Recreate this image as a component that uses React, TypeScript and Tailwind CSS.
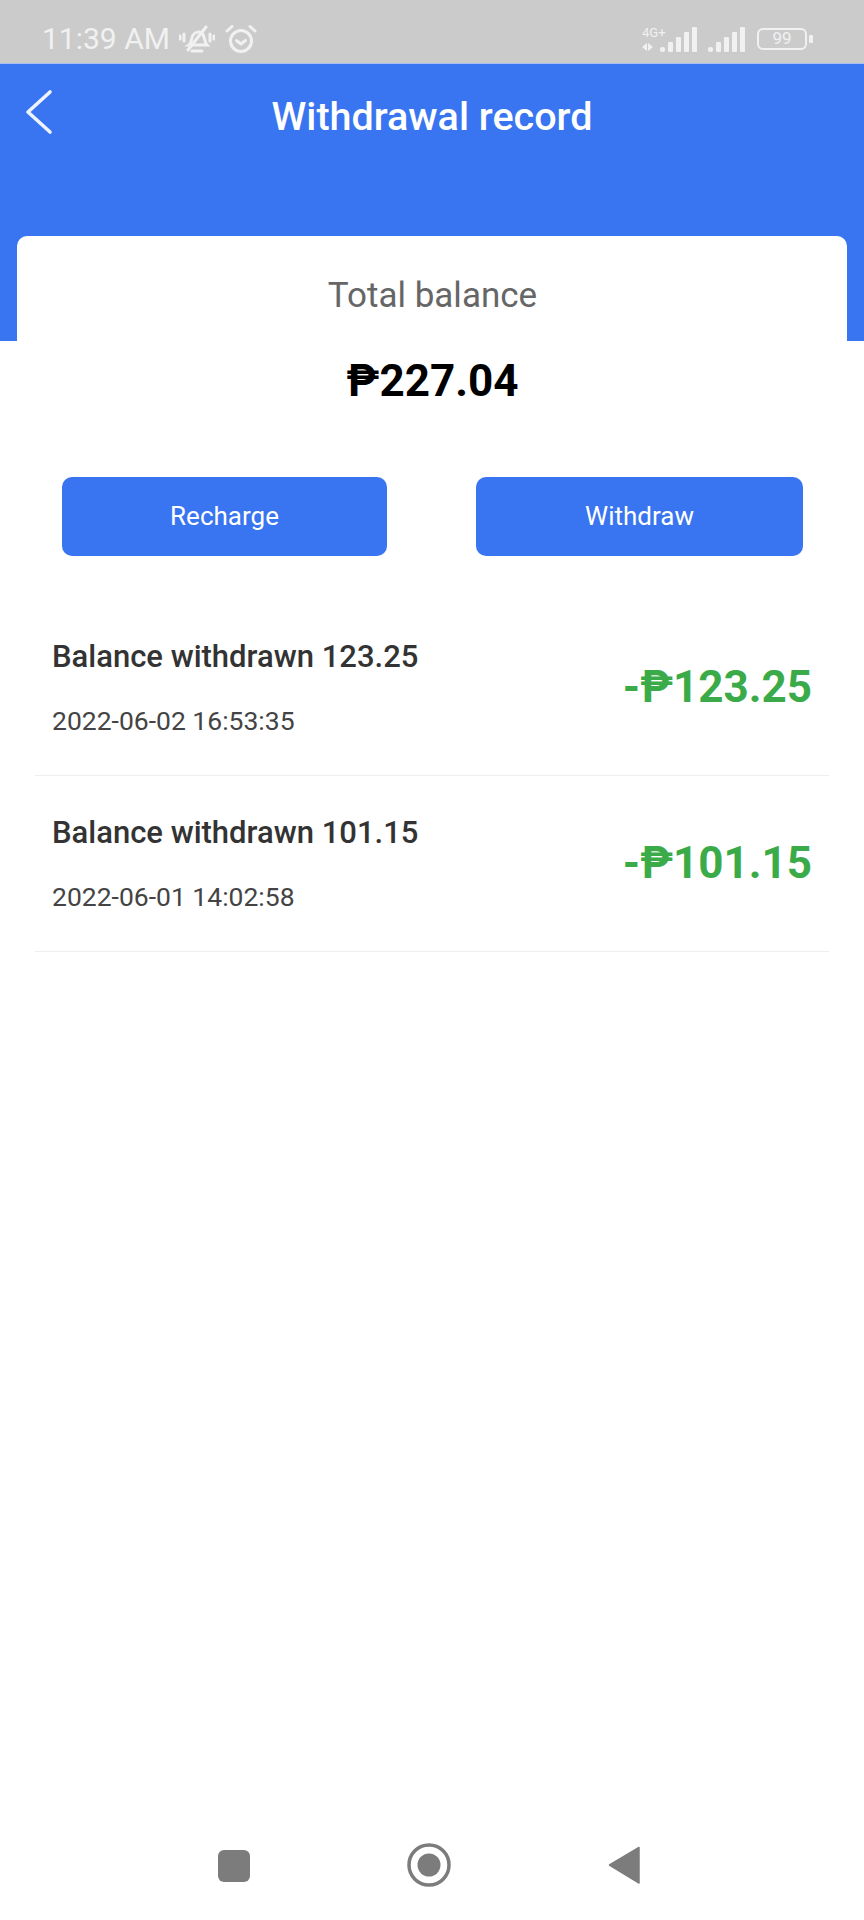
const records = [
  { id: 1, title: 'Balance withdrawn 123.25', date: '2022-06-02 16:53:35', amount: '-₱123.25' },
  { id: 2, title: 'Balance withdrawn 101.15', date: '2022-06-01 14:02:58', amount: '-₱101.15' },
];

function SignalBars() {
  return (
    <>
      <rect x="0" y="21" width="5" height="5" rx="2" />
      <rect x="8" y="16" width="5" height="10" rx="1" />
      <rect x="16" y="11" width="5" height="15" rx="1" />
      <rect x="24" y="6" width="5" height="20" rx="1" />
      <rect x="32" y="1" width="5" height="25" rx="1" />
    </>
  );
}

function StatusBar() {
  return (
    <div className="h-[64px] bg-[#cbcbcb] border-b border-[#a5bff5] flex items-center justify-between pl-[42px] pr-[51px] pt-[14px] text-[#f1f1f1]">
      <div className="flex items-center">
        <span className="text-[30px] leading-none">11:39 AM</span>
        <svg width="36" height="28" viewBox="0 0 36 28" fill="none" stroke="currentColor" strokeWidth="3" strokeLinecap="round" className="ml-[9px]">
          <path d="M10 20c3-2 2-7 4-10s7-4 9-2c3 3 2 9 5 12z" />
          <path d="M13 26h10" />
          <path d="M27 2L9 25" />
          <path d="M5 9v7M1 11v3M31 9v7M35 11v3" />
        </svg>
        <svg width="32" height="28" viewBox="0 0 32 28" fill="none" stroke="currentColor" strokeWidth="3" strokeLinecap="round" strokeLinejoin="round" className="ml-[10px]">
          <circle cx="16" cy="16" r="10.5" />
          <path d="M11.5 15.5l4.5 3.5 4.5-3.5" />
          <path d="M2 6l5-4.5M30 6l-5-4.5" />
        </svg>
      </div>
      <div className="flex items-center">
        <svg width="56" height="26" viewBox="0 0 56 26" fill="currentColor">
          <text x="0" y="11" fontSize="13" fontFamily="Roboto, sans-serif">4G+</text>
          <path d="M0 21l5-4v8zM11 21l-5 4v-8z" />
          <g transform="translate(18 0)">
            <SignalBars />
          </g>
        </svg>
        <svg width="37" height="26" viewBox="0 0 37 26" fill="currentColor" className="ml-[10px]">
          <SignalBars />
        </svg>
        <div className="ml-[12px] w-[50px] h-[22px] border-[2.5px] border-[#f1f1f1] rounded-[6px] flex items-center justify-center text-[17px] leading-none">
          99
        </div>
        <div className="ml-[2px] w-[4px] h-[8px] bg-[#f1f1f1] rounded-[1px]" />
      </div>
    </div>
  );
}

export default function App() {
  return (
    <div className="w-[864px] h-[1920px] bg-white flex flex-col font-['Roboto',sans-serif]">
      <StatusBar />

      <div className="h-[277px] bg-[#3974f1] relative flex justify-center pt-[30px]">
        <svg className="absolute left-[24px] top-[25px]" width="30" height="46" viewBox="0 0 30 46" fill="none" stroke="#eef4ff" strokeWidth="3.6" strokeLinecap="round" strokeLinejoin="round">
          <path d="M26 3L4 23l22 20" />
        </svg>
        <h1 className="text-[39.5px] leading-[46px] font-medium text-white">Withdrawal record</h1>
      </div>

      <div className="-mt-[105px] ml-[17px] mr-[17px] bg-white rounded-t-[10px] relative pl-[45px] pr-[44px]">
        <div className="pt-[36px] text-center text-[35px] leading-[48px] text-[#666666]">Total balance</div>
        <div className="mt-[33px] text-center text-[44px] leading-[56px] font-bold text-black">₱227.04</div>
        <div className="mt-[68px] flex justify-between">
          <button className="w-[325px] h-[79px] bg-[#3974f1] rounded-[10px] text-white text-[26px]">Recharge</button>
          <button className="w-[327px] h-[79px] bg-[#3974f1] rounded-[10px] text-white text-[26px]">Withdraw</button>
        </div>
      </div>

      <div className="mx-[35px] mt-[44px]">
        {records.map((r) => (
          <div key={r.id} className="h-[176px] border-b-[1.5px] border-[#eeeeee] flex items-center justify-between pl-[17px] pr-[17px]">
            <div className="mt-[2px]">
              <div className="text-[31px] leading-[36px] font-medium text-[#333333]">{r.title}</div>
              <div className="mt-[28px] text-[26.5px] leading-[36px] text-[#444444]">{r.date}</div>
            </div>
            <div className="-mt-[2px] text-[44px] leading-[52px] font-bold text-[#3bab4a]">{r.amount}</div>
          </div>
        ))}
      </div>

      <div className="mt-auto h-[94px] relative">
        <div className="absolute left-[218px] top-[24px] w-[32px] h-[32px] rounded-[6px] bg-[#7c7c7c]" />
        <svg className="absolute left-[406px] top-[16px]" width="46" height="46" viewBox="0 0 46 46">
          <circle cx="23" cy="23" r="20" fill="none" stroke="#7c7c7c" strokeWidth="3.5" />
          <circle cx="23" cy="23" r="11.5" fill="#7c7c7c" />
        </svg>
        <svg className="absolute left-[608px] top-[20px]" width="33" height="38" viewBox="0 0 33 38">
          <path d="M31 1.5v35.5L1.5 19z" fill="#7c7c7c" stroke="#7c7c7c" strokeWidth="1.5" strokeLinejoin="round" />
        </svg>
      </div>
    </div>
  );
}
